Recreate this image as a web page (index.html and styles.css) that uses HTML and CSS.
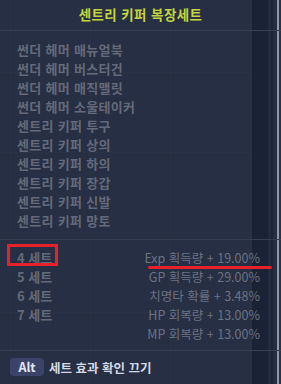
FILE: index.html
```html
<!DOCTYPE html>
<html lang="ko">
<head>
    <meta charset="UTF-8">
    <meta name="viewport" content="width=device-width, initial-scale=1.0">
    <title>센트리 키퍼 복장세트</title>
    <link rel="stylesheet" href="styles.css">
</head>
<body>
    <div class="tooltip">
        <div class="title">센트리 키퍼 복장세트</div>

        <ul class="items">
            <li>썬더 헤머 매뉴얼북</li>
            <li>썬더 헤머 버스터건</li>
            <li>썬더 헤머 매직맬릿</li>
            <li>썬더 헤머 소울테이커</li>
            <li>센트리 키퍼 투구</li>
            <li>센트리 키퍼 상의</li>
            <li>센트리 키퍼 하의</li>
            <li>센트리 키퍼 장갑</li>
            <li>센트리 키퍼 신발</li>
            <li>센트리 키퍼 망토</li>
        </ul>

        <div class="sets">
            <div class="set-row marked">
                <span class="set-name boxed">4 세트</span>
                <span class="set-value">Exp 획득량 + 19.00%</span>
            </div>
            <div class="set-row">
                <span class="set-name">5 세트</span>
                <span class="set-value">GP 획득량 + 29.00%</span>
            </div>
            <div class="set-row">
                <span class="set-name">6 세트</span>
                <span class="set-value">치명타 확률 + 3.48%</span>
            </div>
            <div class="set-row">
                <span class="set-name">7 세트</span>
                <span class="set-value">HP 회복량 + 13.00%</span>
            </div>
            <div class="set-row">
                <span class="set-name"></span>
                <span class="set-value">MP 회복량 + 13.00%</span>
            </div>
        </div>

        <div class="footer">
            <span class="key">Alt</span>
            <span class="hint">세트 효과 확인 끄기</span>
        </div>
    </div>
</body>
</html>
```

FILE: styles.css
```css
body {
    margin: 0;
    background-color: #262f43;
    font-family: "Noto Sans CJK KR", "Noto Sans", sans-serif;
}

.tooltip {
    width: 281px;
    height: 384px;
    box-sizing: border-box;
    background-color: #262f43;
    background-image:
        linear-gradient(to right,
            transparent 252px,
            #1a2236 252px, #1a2236 268px,
            #232c3f 268px, #232c3f 271px,
            #1c2437 271px, #1c2437 273px,
            #252e41 273px, #252e41 277px,
            #8e97ab 277px, #8e97ab 279px,
            #2a3346 279px),
        repeating-linear-gradient(to right,
            transparent 0, transparent 10px,
            #2a3346 10px, #2a3346 11px,
            transparent 11px, transparent 80px),
        repeating-linear-gradient(to bottom,
            transparent 0, transparent 72px,
            #2a3346 72px, #2a3346 73px,
            transparent 73px, transparent 80px);
}

.title {
    height: 30px;
    line-height: 28px;
    text-align: center;
    font-size: 13.5px;
    font-weight: bold;
    letter-spacing: 0.4px;
    color: #c4d53d;
    border-bottom: 1px solid #364055;
}

.items {
    list-style: none;
    margin: 0;
    padding: 9px 17px 9px;
    border-bottom: 1px solid #364055;
}

.items li,
.set-row {
    height: 19px;
    line-height: 19px;
    font-size: 13px;
    font-weight: bold;
    color: #646a79;
    white-space: nowrap;
}

.items li {
    letter-spacing: 0.3px;
}

.sets {
    padding: 8px 21px 7px 17px;
    border-bottom: 1px solid #364055;
}

.set-row {
    display: flex;
    justify-content: space-between;
    position: relative;
}

.set-value {
    font-size: 12.5px;
    color: #6c7282;
    font-weight: normal;
}

/* red annotation marks */
.boxed {
    position: relative;
}

.boxed::after {
    content: "";
    position: absolute;
    top: -4px;
    bottom: 1px;
    left: -10px;
    right: -6px;
    border: 3px solid #e8202a;
}

.marked::after {
    content: "";
    position: absolute;
    left: 131px;
    width: 124px;
    top: 18px;
    height: 3px;
    border-radius: 2px;
    background-color: #e8202a;
}

.footer {
    display: flex;
    align-items: center;
    gap: 5px;
    height: 32px;
    padding-left: 10px;
}

.key {
    display: inline-block;
    width: 34px;
    height: 18px;
    line-height: 18px;
    border-radius: 4px;
    background-color: #3b4468;
    color: #e2e6f2;
    font-size: 12.5px;
    font-weight: bold;
    text-align: center;
}

.hint {
    font-size: 12.5px;
    font-weight: bold;
    color: #d5d9e4;
}
```
